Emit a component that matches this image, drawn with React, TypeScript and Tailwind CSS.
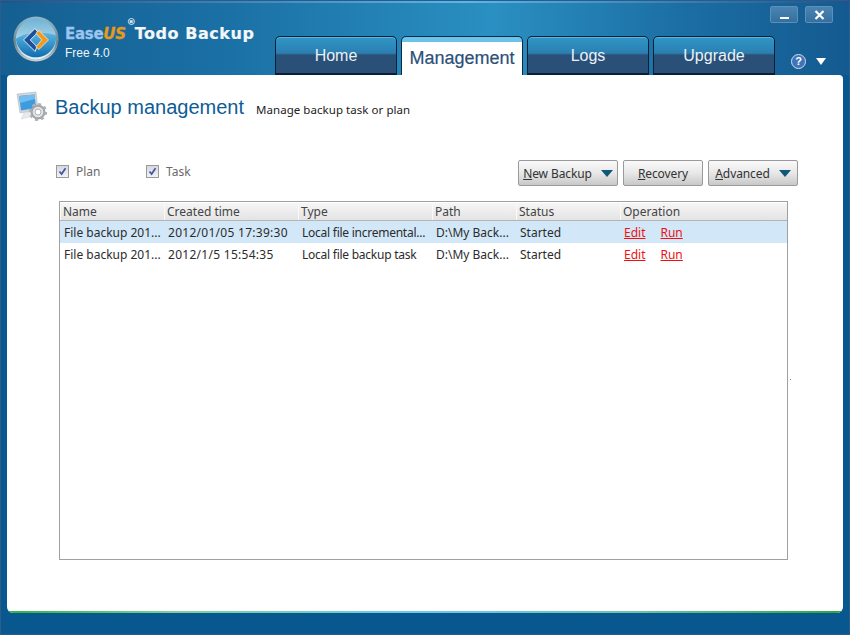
import React from "react";

const ui = "font-['Noto_Sans','Liberation_Sans',sans-serif]";

function Logo() {
  return (
    <svg width="48" height="48" viewBox="0 0 50 50" className="shrink-0">
      <defs>
        <linearGradient id="rim" x1="0" y1="0" x2="0" y2="1">
          <stop offset="0" stopColor="#8fb7cc" />
          <stop offset="0.6" stopColor="#6f8790" />
          <stop offset="1" stopColor="#c9d2d4" />
        </linearGradient>
        <linearGradient id="sky" x1="0" y1="0" x2="0" y2="1">
          <stop offset="0" stopColor="#6fb4d6" />
          <stop offset="1" stopColor="#e4f1f5" />
        </linearGradient>
        <linearGradient id="sea" x1="0" y1="0" x2="0" y2="1">
          <stop offset="0" stopColor="#5bb6df" />
          <stop offset="1" stopColor="#0e6db0" />
        </linearGradient>
      </defs>
      <circle cx="25" cy="25" r="23.5" fill="url(#rim)" />
      <circle cx="25" cy="25" r="21" fill="url(#sky)" />
      <path d="M4 25 C14 17 34 17 46 21 A21 21 0 0 1 4 25Z" fill="url(#sea)" />
      <path d="M24 14 L12 26 L24 38 L26 33 L19 26 L27 18Z" fill="#1e4f9c" stroke="#e8f2f8" strokeWidth="1" />
      <path d="M28 16 L38 26 L28 36 L25 33 L31 26 L25 19Z" fill="#f39a1e" stroke="#e8f2f8" strokeWidth="0.8" />
    </svg>
  );
}

function MonitorIcon() {
  return (
    <svg width="32" height="32" viewBox="0 0 32 32" className="shrink-0">
      <path d="M2 3 L21 1 L23 19 L5 22Z" fill="#d4d6da" stroke="#b4b8bc" strokeWidth="0.6" />
      <path d="M4 5 L19.5 3.5 L21 17 L6 19.5Z" fill="#3d9be0" />
      <path d="M4 5 L19.5 3.5 L20 8 L5 12Z" fill="#73bdf0" />
      <path d="M9 22 L17 21 L19 25 L6 28Z" fill="#e8eaec" stroke="#ccd0d4" strokeWidth="0.5" />
      <g transform="translate(23 21)">
        <circle r="6.4" fill="#e6e6e6" stroke="#a2a6aa" strokeWidth="2.2" />
        <circle r="8" fill="none" stroke="#aeb2b6" strokeWidth="2.2" strokeDasharray="3 3.28" />
        <circle r="3" fill="#ffffff" stroke="#9a9ea2" strokeWidth="0.8" />
      </g>
    </svg>
  );
}

function Tab({ label, active }: { label: string; active?: boolean }) {
  if (active) {
    return (
      <div className="w-[122px] h-[39px] rounded-t-[5px] border-t border-x border-[#0c2a44] border-b-0 bg-[linear-gradient(#6cc3ea_0,#6cc3ea_5px,#ffffff_5px)] flex items-center justify-center pt-[5px]">
        <span className="font-['Liberation_Sans',sans-serif] text-[18px] text-[#2a5078] [-webkit-text-stroke:0.2px_#2a5078]">{label}</span>
      </div>
    );
  }
  return (
    <div className="w-[122px] h-[39px] rounded-t-[5px] border border-b-2 border-[#0a1f33] shadow-[inset_0_1px_0_#5ab4dc] bg-[linear-gradient(#2f97c8_0,#2b7fb0_45%,#2a5078_50%,#2a5078_100%)] flex items-center justify-center pt-[2px]">
      <span className="font-['Liberation_Sans',sans-serif] font-light text-[16px] text-[#e8f2f8]">{label}</span>
    </div>
  );
}

function WinButton({ children }: { children: React.ReactNode }) {
  return (
    <div className="w-[28px] h-[17px] rounded-[2px] border border-[#5d8fb8] bg-[linear-gradient(#4a84b2,#34709f)] flex items-center justify-center">
      {children}
    </div>
  );
}

function Check({ label, className }: { label: string; className?: string }) {
  return (
    <div className={`flex items-center gap-[7px] ${className ?? ""}`}>
      <div className="w-[13px] h-[13px] border border-[#9a9a9a] bg-[linear-gradient(#d8d8dc,#f2f2f4)] flex items-center justify-center">
        <svg width="9" height="9" viewBox="0 0 9 9">
          <path d="M1.5 4.5 L3.6 7 L7.5 1.2" fill="none" stroke="#3f55a8" strokeWidth="1.7" />
        </svg>
      </div>
      <span className="text-[12px] text-[#6a6a6a] pt-[1px]">{label}</span>
    </div>
  );
}

function Btn({ first, rest, w, arrow }: { first: string; rest: string; w: string; arrow?: boolean }) {
  return (
    <div className={`${w} h-[26px] rounded-[2px] border border-[#9a9a9a] bg-[linear-gradient(#fafafa,#e8e8e8_50%,#c8c8c8)] flex items-center justify-center gap-[9px]`}>
      <span className="text-[12px] text-[#333] tracking-[-0.1px] pt-[1px]">
        <span className="underline">{first}</span>
        {rest}
      </span>
      {arrow && <span className="w-0 h-0 border-x-[6px] border-x-transparent border-t-[7px] border-t-[#0f5878]" />}
    </div>
  );
}

const cols = ["w-[104px]", "w-[134px]", "w-[134px]", "w-[84px]", "w-[104px]", "flex-1"];
const heads = ["Name", "Created time", "Type", "Path", "Status", "Operation"];
const rows = [
  ["File backup 201...", "2012/01/05 17:39:30", "Local file incremental...", "D:\\My Back...", "Started"],
  ["File backup 201...", "2012/1/5 15:54:35", "Local file backup task", "D:\\My Back...", "Started"],
];
const cellText = ["", "tracking-[0.28px]", "tracking-[-0.25px]", "", ""];

export default function App() {
  return (
    <div className={`${ui} relative w-[850px] h-[635px] overflow-hidden flex flex-col border-x border-b border-[#2b5c8c] bg-[#08588f] px-[6px]`}>
      <div className="-mx-[6px] h-[75px] px-[6px] flex shrink-0 border-t border-t-[#2a5a90] bg-[linear-gradient(90deg,#1f5488,#5cb8e0_55%,#1f5488),repeating-conic-gradient(#ffffff08_0_25%,#00000008_0_50%),linear-gradient(90deg,#155f92_0%,#1a6fa4_25%,#2a8fc2_58%,#1a6ca2_82%,#145a90_100%)] bg-[length:100%_2px,3px_3px,100%_100%] bg-no-repeat">
        <div className="w-[268px] shrink-0 flex items-start pl-[5px] pt-[14px] gap-[5px]">
          <Logo />
          <div className="flex flex-col pt-[8px]">
            <div className="font-['DejaVu_Sans',sans-serif] font-bold text-[16px] leading-[22px] tracking-[0.55px] whitespace-nowrap flex">
              <span className="text-[#9cc4ee] text-[15px] tracking-[-0.3px] [-webkit-text-stroke:0.3px_#9cc4ee]">Ease</span>
              <span className="text-[#e89a1a] italic text-[15px] tracking-[-0.3px] [-webkit-text-stroke:0.3px_#e89a1a]">US</span>
              <span className="text-white text-[9px] leading-[9px] -mt-[5px] w-[8px] ml-[1px]">®</span>
              <span className="text-[#f4f6f8] [-webkit-text-stroke:0.2px_#f4f6f8]">Todo Backup</span>
            </div>
            <span className="font-['Liberation_Sans',sans-serif] text-[12px] leading-[14px] text-[#eef5fa] mt-[1px]">Free 4.0</span>
          </div>
        </div>
        <div className="flex items-end gap-[4px] w-[500px] shrink-0">
          <Tab label="Home" />
          <Tab label="Management" active />
          <Tab label="Logs" />
          <Tab label="Upgrade" />
        </div>
        <div className="flex-1 -ml-[10px] flex flex-col items-end pr-[10px] pt-[5px]">
          <div className="flex gap-[7px]">
            <WinButton>
              <div className="w-[9px] h-[2px] bg-white mt-[6px]" />
            </WinButton>
            <WinButton>
              <svg width="11" height="10" viewBox="0 0 11 10">
                <path d="M1.5 1 L9.5 9 M9.5 1 L1.5 9" stroke="#ffffff" strokeWidth="2.2" />
              </svg>
            </WinButton>
          </div>
          <div className="flex items-center gap-[10px] mt-[31px] mr-[7px]">
            <div className="w-[15px] h-[15px] rounded-full border border-[#cfe0f0] bg-[#3f74b8] flex items-center justify-center text-[11px] leading-none font-bold text-white font-['Liberation_Sans',sans-serif]">?</div>
            <span className="w-0 h-0 border-x-[5px] border-x-transparent border-t-[7px] border-t-white" />
          </div>
        </div>
      </div>

      <div className="h-[538px] shrink-0 rounded-b-[6px] rounded-t-[4px] bg-white overflow-hidden flex flex-col">
        <div className="flex items-center h-[60px] pl-[8px] pt-[3px]">
          <MonitorIcon />
          <span className="ml-[8px] font-['Liberation_Sans',sans-serif] text-[20px] leading-none text-[#0e5c96]">Backup management</span>
          <span className="ml-[12px] mt-[6px] text-[11.5px] tracking-[0.05px] text-[#222]">Manage backup task or plan</span>
        </div>
        <div className="flex items-center justify-between pl-[49px] pr-[45px] mt-[25px] h-[26px]">
          <div className="flex items-center -mt-[4px]">
            <Check label="Plan" className="w-[90px]" />
            <Check label="Task" />
          </div>
          <div className="flex gap-[5px]">
            <Btn first="N" rest="ew Backup" w="w-[100px]" arrow />
            <Btn first="R" rest="ecovery" w="w-[80px]" />
            <Btn first="A" rest="dvanced" w="w-[90px]" arrow />
          </div>
        </div>
        <div className="ml-[52px] w-[729px] h-[359px] mt-[15px] border border-[#a0a0a0] text-[12px] text-[#2c2c2c]">
          <div className="h-[19px] flex bg-[linear-gradient(#f6f6f6,#e4e4e4)] border-b border-[#b4b4b4] border-t border-t-[#fff]">
            {heads.map((h, i) => (
              <div key={h} className={`${cols[i]} pl-[2px] leading-[18px] border-l border-[#fafafa] text-[#444] whitespace-nowrap`}>{h}</div>
            ))}
          </div>
          {rows.map((r, ri) => (
            <div key={ri} className={`h-[22px] flex items-center pt-[1px] ${ri === 0 ? "bg-[#d2e8f8]" : "bg-white"}`}>
              {r.map((c, i) => (
                <div key={i} className={`${cols[i]} ${cellText[i]} pl-[4px] whitespace-nowrap overflow-hidden`}>{c}</div>
              ))}
              <div className="flex-1 pl-[4px] flex gap-[15px] text-[#f01010] underline">
                <span>Edit</span>
                <span>Run</span>
              </div>
            </div>
          ))}
        </div>
        <div className="flex-1" />
        <div className="h-[2px] shrink-0 bg-[linear-gradient(90deg,#2db443,#7fcf9a_20%,#6cc8ec_50%,#6cc4a8_75%,#28a83c_100%)]" />
      </div>
      <div className="absolute left-[789px] top-[379px] w-[1px] h-[1px] bg-[#888]" />
    </div>
  );
}
